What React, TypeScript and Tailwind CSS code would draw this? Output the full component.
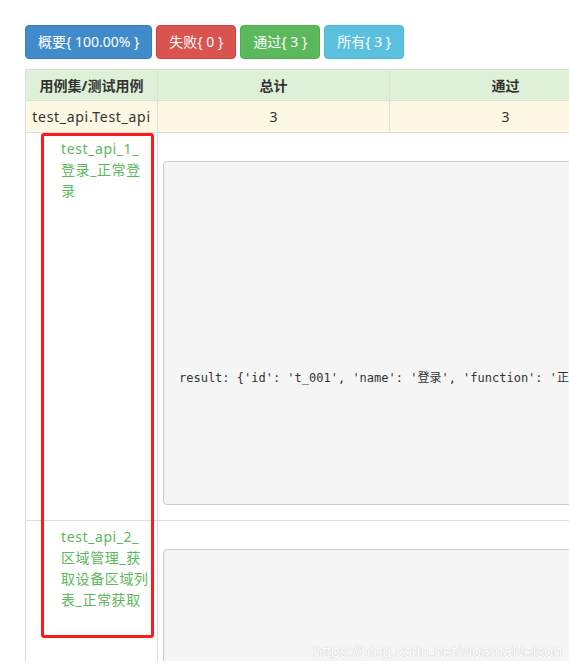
import React from 'react'

const font = { fontFamily: '"Noto Sans", "Noto Sans CJK SC", sans-serif' }

const buttons = [
  { label: '概要{ 100.00% }', cls: 'bg-[#428bca] border-[#357ebd]' },
  { label: '失败{ 0 }', cls: 'bg-[#d9534f] border-[#d43f3a]' },
  { label: '通过{ 3 }', cls: 'bg-[#5cb85c] border-[#4cae4c]' },
  { label: '所有{ 3 }', cls: 'bg-[#5bc0de] border-[#46b8da]' },
]

// 用例名按截图中的换行位置拆开
const cases = [
  {
    lines: ['test_api_1_', '登录_正常登', '录'],
    result: "result: {'id': 't_001', 'name': '登录', 'function': '正常登录', 'url': '/api/login', 'method': 'post'}",
  },
  {
    lines: ['test_api_2_', '区域管理_获', '取设备区域列', '表_正常获取'],
    result: "result: {'id': 't_002', 'name': '区域管理', 'function': '获取设备区域列表_正常获取'}",
  },
]

export default function App() {
  return (
    <div className="relative h-[661px] w-[569px] overflow-hidden bg-white text-[14px] text-[#333]" style={font}>
      {/* 按钮 */}
      <div className="flex gap-[4px] pl-[25px] pt-[25px]">
        {buttons.map((b) => (
          <div
            key={b.label}
            className={`h-[34px] rounded-[4px] border px-[12px] leading-[32px] whitespace-pre text-white ${b.cls}`}
          >
            {b.label}
          </div>
        ))}
      </div>

      {/* 表格 */}
      <table className="mt-[10px] ml-[25px] w-[828px] table-fixed border-collapse">
        <colgroup>
          <col className="w-[132px]" />
          <col className="w-[232px]" />
          <col className="w-[232px]" />
          <col className="w-[232px]" />
        </colgroup>
        <thead>
          <tr className="h-[31px] bg-[#dff0d8]">
            <th className="border border-[#ddd] p-0 text-center font-bold whitespace-nowrap">用例集/测试用例</th>
            <th className="border border-[#ddd] p-0 text-center font-bold">总计</th>
            <th className="border border-[#ddd] p-0 text-center font-bold">通过</th>
            <th className="border border-[#ddd] p-0 text-center font-bold">失败</th>
          </tr>
        </thead>
        <tbody>
          <tr className="h-[32px] bg-[#fcf8e3]">
            <td className="border border-[#ddd] p-0 text-center whitespace-nowrap tracking-[0.7px]">test_api.Test_api</td>
            <td className="border border-[#ddd] p-0 text-center">3</td>
            <td className="border border-[#ddd] p-0 text-center">3</td>
            <td className="border border-[#ddd] p-0 text-center">0</td>
          </tr>
          {cases.map((c) => (
            <tr key={c.lines[0]}>
              <td className="border border-[#ddd] pt-[5px] pr-[0px] pl-[35px] align-top leading-[21px] whitespace-nowrap text-[#5cb85c] tracking-[0.6px]">
                {c.lines.map((l) => (
                  <div key={l}>{l}</div>
                ))}
              </td>
              <td colSpan={3} className="border border-[#ddd] px-[5px] pt-[28px] pb-[15px] align-top">
                <pre
                  className="h-[344px] overflow-hidden rounded-[4px] border border-[#ccc] bg-[#f5f5f5] pt-[208px] pl-[15px] text-[12px] leading-[17px] whitespace-pre text-[#333]"
                  style={{ fontFamily: '"DejaVu Sans Mono", "Noto Sans CJK SC", monospace' }}
                >
                  {c.result}
                </pre>
              </td>
            </tr>
          ))}
        </tbody>
      </table>

      {/* 红框标注 */}
      <div className="absolute top-[133px] left-[41px] h-[505px] w-[113px] rounded-[3px] border-[3px] border-[#ff1a1a]" />

      {/* 水印 */}
      <div
        className="absolute top-[640px] left-[313px] text-[16px] whitespace-nowrap text-white"
        style={{ fontFamily: '"Liberation Sans", Arial, sans-serif', textShadow: '0 0 1px #b0b0b0' }}
      >
        https://blog.csdn.net/NoamaNelson
      </div>
    </div>
  )
}
